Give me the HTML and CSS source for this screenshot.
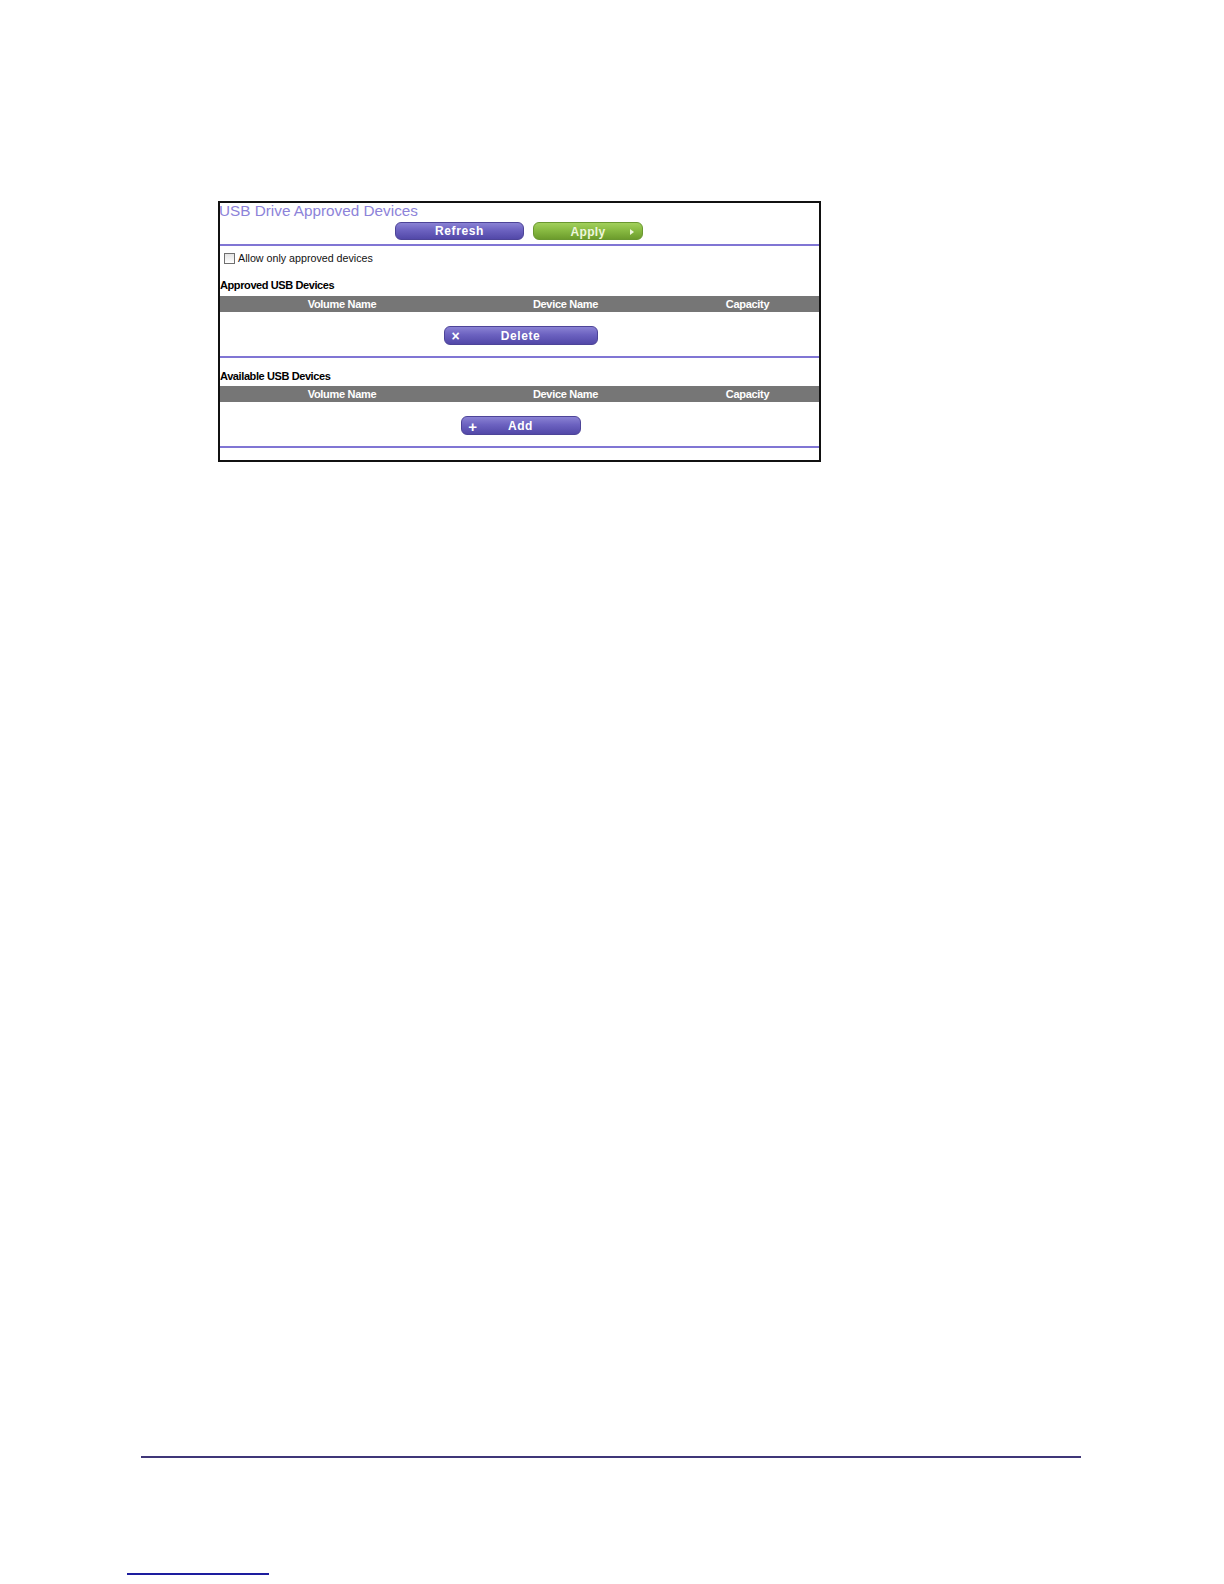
FILE: index.html
```html
<!DOCTYPE html>
<html lang="en">
<head>
<meta charset="utf-8">
<title>USB Drive Approved Devices</title>
<link rel="stylesheet" href="styles.css">
</head>
<body>
<div class="page">
  <div class="frame">
    <div class="title">USB Drive Approved Devices</div>
    <div class="toolbar">
      <div class="btn btn-purple btn-refresh"><span class="btn-label">Refresh</span></div>
      <div class="btn btn-green btn-apply"><span class="btn-side"></span><span class="btn-label">Apply</span><span class="btn-side"><span class="arrow"></span></span></div>
    </div>
    <div class="rule"></div>
    <div class="check-row">
      <span class="checkbox"></span>
      <span class="check-label">Allow only approved devices</span>
    </div>
    <div class="section-title first">Approved USB Devices</div>
    <div class="thead first">
      <span>Volume Name</span>
      <span>Device Name</span>
      <span class="cap">Capacity</span>
    </div>
    <div class="btn-row">
      <div class="btn btn-purple btn-delete"><span class="btn-side icon">&#215;</span><span class="btn-label">Delete</span><span class="btn-side"></span></div>
    </div>
    <div class="rule mid"></div>
    <div class="section-title">Available USB Devices</div>
    <div class="thead">
      <span>Volume Name</span>
      <span>Device Name</span>
      <span class="cap">Capacity</span>
    </div>
    <div class="btn-row">
      <div class="btn btn-purple btn-add"><span class="btn-side icon plus">+</span><span class="btn-label">Add</span><span class="btn-side"></span></div>
    </div>
    <div class="rule mid"></div>
  </div>
  <div class="footer-rule"></div>
  <div class="footnote-rule"></div>
</div>
</body>
</html>
```

FILE: styles.css
```css
html, body {
  margin: 0;
  padding: 0;
  background: #ffffff;
}

body {
  font-family: "Liberation Sans", Arial, sans-serif;
  color: #000;
}

.page {
  padding-top: 201px;
}

.frame {
  margin-left: 218px;
  width: 603px;
  box-sizing: border-box;
  border: 2px solid #111;
  padding-bottom: 12px;
  overflow: hidden;
}

.title {
  font-size: 15.3px;
  line-height: 16px;
  height: 16px;
  color: #8d83d9;
  margin-left: -1px;
  white-space: nowrap;
}

.toolbar {
  display: flex;
  gap: 9px;
  margin-top: 3px;
  padding-left: 175px;
  height: 18px;
}

.btn {
  height: 18px;
  border-radius: 6px;
  box-sizing: border-box;
  color: #ffffff;
  font-weight: bold;
  font-size: 12px;
  letter-spacing: 0.6px;
  display: grid;
  grid-template-columns: 23px 1fr 23px;
  align-items: center;
  text-align: center;
  line-height: 18px;
}

.btn-label {
  grid-column: 2;
}

.btn-side {
  display: flex;
  align-items: center;
  justify-content: center;
}

.btn-purple {
  background: linear-gradient(#8a82d4 0%, #6c62c0 45%, #5248a8 100%);
  border: 1px solid #4d4498;
}

.btn-green {
  background: linear-gradient(#a2d05c 0%, #86b840 50%, #6c9c2c 100%);
  border: 1px solid #6a9830;
  color: #eef6dc;
}

.btn-refresh {
  width: 129px;
  display: flex;
  justify-content: center;
}

.btn-apply {
  width: 110px;
  letter-spacing: 0.3px;
}

.arrow {
  width: 0;
  height: 0;
  border-top: 3px solid transparent;
  border-bottom: 3px solid transparent;
  border-left: 4px solid #eef6dc;
  margin-left: 2px;
}

.rule {
  height: 2px;
  background: #8075d4;
  margin-top: 4px;
}

.rule.mid {
  margin-top: 11px;
}

.check-row {
  display: flex;
  align-items: center;
  gap: 3px;
  margin-top: 6px;
  padding-left: 4px;
  height: 12px;
}

.checkbox {
  width: 11px;
  height: 11px;
  box-sizing: border-box;
  border: 1px solid #6f6f6f;
  background: linear-gradient(#e4e4e4, #ffffff);
}

.check-label {
  font-size: 10.7px;
  line-height: 12px;
  color: #111;
}

.section-title {
  margin-top: 12px;
  font-size: 11px;
  line-height: 13px;
  font-weight: bold;
  letter-spacing: -0.4px;
}

.section-title.first {
  margin-top: 15px;
}

.thead {
  margin-top: 3px;
  height: 16px;
  background: #767676;
  display: grid;
  grid-template-columns: 244px 203px 1fr;
  color: #ffffff;
  font-size: 11px;
  font-weight: bold;
  line-height: 16px;
  text-align: center;
  letter-spacing: -0.3px;
}

.thead.first {
  margin-top: 4px;
}

.thead .cap {
  padding-left: 9px;
}

.btn-row {
  margin-top: 14px;
  display: flex;
  justify-content: center;
  padding-left: 2px;
}

.btn-delete,
.btn-add {
  height: 19px;
  line-height: 19px;
}

.btn-delete {
  width: 154px;
}

.btn-add {
  width: 120px;
}

.icon {
  font-size: 14px;
  font-weight: bold;
}

.icon.plus {
  font-size: 15px;
}

.footer-rule {
  margin-top: 994px;
  margin-left: 141px;
  width: 940px;
  height: 2px;
  background: #3f3678;
}

.footnote-rule {
  margin-top: 115px;
  margin-left: 127px;
  width: 142px;
  height: 2px;
  background: #1d1d9e;
}
```
